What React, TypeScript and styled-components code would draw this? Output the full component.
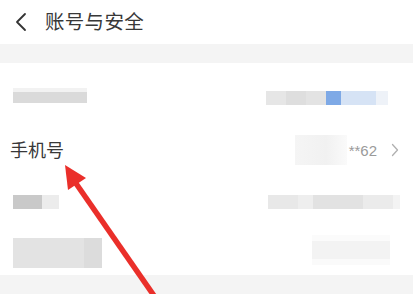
import React from "react";
import styled, { createGlobalStyle } from "styled-components";

const Global = createGlobalStyle`
  html, body { margin: 0; padding: 0; background: #fff; }
  body { font-family: "Noto Sans CJK SC", "Noto Sans", sans-serif; }
`;

const Page = styled.div`
  position: relative;
  width: 413px;
  height: 294px;
  overflow: hidden;
  background: #fff;
  display: flex;
  flex-direction: column;
`;

const Header = styled.div`
  height: 44px;
  display: flex;
  align-items: center;
  padding-left: 14px;
  gap: 17px;
  flex-shrink: 0;
`;

const Title = styled.div`
  font-size: 19.5px;
  color: #383838;
  letter-spacing: 0.3px;
  line-height: 1;
  margin-top: -2px;
`;

const Band = styled.div<{ $h: number }>`
  height: ${(p) => p.$h}px;
  background: #f4f4f4;
  flex-shrink: 0;
`;

const List = styled.div`
  display: flex;
  flex-direction: column;
  flex: 1;
`;

const Row = styled.div<{ $h: number }>`
  height: ${(p) => p.$h}px;
  display: flex;
  align-items: center;
  justify-content: space-between;
  padding: 0 13px 0 13px;
`;

const Label = styled.div`
  font-size: 18px;
  color: #383838;
  margin-left: -3px;
  margin-top: -2px;
  line-height: 1;
`;

const Mosaic = styled.div<{ $w: number; $h: number; $bg: string; $dy?: number; $mr?: number }>`
  width: ${(p) => p.$w}px;
  height: ${(p) => p.$h}px;
  background: ${(p) => p.$bg};
  margin-top: ${(p) => p.$dy ?? 0}px;
  margin-right: ${(p) => p.$mr ?? 0}px;
  flex-shrink: 0;
`;

const Right = styled.div`
  display: flex;
  align-items: center;
`;

const Masked = styled.span`
  font-family: "Liberation Sans", Arial, sans-serif;
  font-size: 15px;
  color: #9a9a9a;
`;

const Arrow = styled.svg`
  position: absolute;
  left: 0;
  top: 0;
  pointer-events: none;
`;

const Chevron = styled.svg`
  margin-left: 14px;
  margin-right: 1px;
`;

export default function App() {
  return (
    <>
      <Global />
      <Page>
        <Header>
          <svg width="14" height="20" viewBox="0 0 14 20">
            <path d="M11 2 L3 10 L11 18" fill="none" stroke="#333" strokeWidth="1.8" strokeLinecap="round" strokeLinejoin="round" />
          </svg>
          <Title>账号与安全</Title>
        </Header>
        <Band $h={19} />
        <List>
          <Row $h={60}>
            <Mosaic
              $w={74}
              $h={15}
              $dy={4}
              $bg="linear-gradient(180deg,#f2f2f2 0 25%,#dadada 25% 100%), #ddd"
            />
            <Mosaic
              $w={122}
              $h={24}
              $dy={2}
              $mr={12}
              $bg="linear-gradient(180deg,#fff 0 9px,transparent 9px 23px,#fff 23px), linear-gradient(90deg,#e6e6e6 0 20px,#dedede 20px 40px,#e3e3e3 40px 60px,#7ea9e6 60px 75px,#d6e3f5 75px 110px,#eef2f8 110px 122px)"
            />
          </Row>
          <Row $h={54}>
            <Label>手机号</Label>
            <Right>
              <Mosaic $w={52} $h={30} $mr={2} $bg="linear-gradient(90deg,#f5f5f5,#f1f1f1 60%,#fafafa)" />
              <Masked>**62</Masked>
              <Chevron width="8" height="14" viewBox="0 0 8 14">
                <path d="M1.5 1.5 L6.5 7 L1.5 12.5" fill="none" stroke="#b0b0b0" strokeWidth="1.3" strokeLinecap="round" strokeLinejoin="round" />
              </Chevron>
            </Right>
          </Row>
          <Row $h={50}>
            <Mosaic $w={46} $h={14} $bg="linear-gradient(90deg,#c9c9c9 0 29px,#ececec 29px)" />
            <Mosaic
              $w={132}
              $h={14}
              $bg="linear-gradient(90deg,#e8e8e8 0 30px,#eeeeee 30px 45px,#e2e2e2 45px 95px,#ebebeb 95px 125px,#f3f3f3 125px)"
            />
          </Row>
          <Row $h={48}>
            <Mosaic $w={89} $h={30} $dy={4} $bg="linear-gradient(90deg,#e3e3e3 0 80%,#dcdcdc 80%)" />
            <Mosaic $w={78} $h={30} $dy={-2} $mr={10} $bg="linear-gradient(180deg,#fbfbfb 0 6px,#f3f3f3 6px 24px,#fafafa 24px)" />
          </Row>
        </List>
        <Band $h={20} />
        <Arrow width="413" height="294" viewBox="0 0 413 294">
          <line x1="75" y1="182" x2="157" y2="300" stroke="#ea2f2a" strokeWidth="5.5" strokeLinecap="butt" />
          <polygon points="65,165 86,178 68,190" fill="#ea2f2a" />
        </Arrow>
      </Page>
    </>
  );
}
